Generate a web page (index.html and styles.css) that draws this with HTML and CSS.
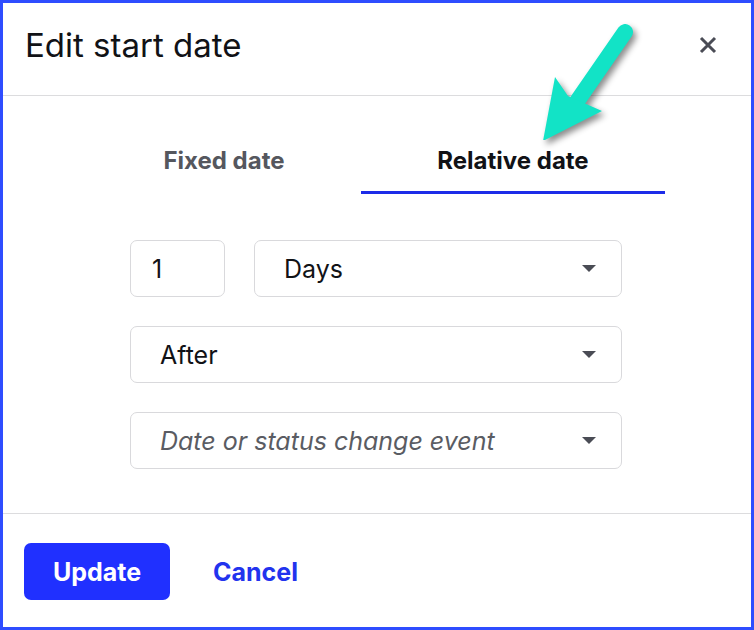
FILE: index.html
```html
<!DOCTYPE html>
<html lang="en">
<head>
    <meta charset="UTF-8">
    <meta name="viewport" content="width=device-width, initial-scale=1.0">
    <title>Edit start date</title>
    <link rel="stylesheet" href="styles.css">
</head>
<body>

    <div class="frame">
        <div class="modal-header">
            <h1>Edit start date</h1>
            <button class="close" aria-label="Close">
                <svg width="18" height="18" viewBox="0 0 18 18">
                    <path d="M2 2 L16 16 M16 2 L2 16" stroke="#4a4c55" stroke-width="3" stroke-linecap="butt"/>
                </svg>
            </button>
        </div>

        <div class="modal-body">
            <div class="tabs">
                <div class="tab">Fixed date</div>
                <div class="tab active">Relative date</div>
            </div>

            <form class="fields">
                <div class="row">
                    <div class="field number">1</div>
                    <div class="field select">
                        <span>Days</span>
                        <span class="caret"></span>
                    </div>
                </div>
                <div class="field select wide">
                    <span>After</span>
                    <span class="caret"></span>
                </div>
                <div class="field select wide">
                    <span class="placeholder">Date or status change event</span>
                    <span class="caret"></span>
                </div>
            </form>
        </div>

        <div class="modal-footer">
            <button class="btn-primary">Update</button>
            <button class="btn-link">Cancel</button>
        </div>

        <!-- flecha de anotación -->
        <svg class="pointer" width="120" height="140" viewBox="0 0 120 140">
            <line x1="105" y1="32" x2="58" y2="100" stroke="#12e3c6" stroke-width="16" stroke-linecap="round"/>
            <polygon points="23,141 35,77 48,96 82,111" fill="#12e3c6"/>
        </svg>
    </div>

</body>
</html>
```

FILE: styles.css
```css
body {
    margin: 0;
    padding: 0;
    font-family: 'Inter', 'Liberation Sans', sans-serif;
    background: #fff;
}

.frame {
    position: relative;
    width: 754px;
    height: 630px;
    box-sizing: border-box;
    border: 3px solid #2f4dff;
    display: flex;
    flex-direction: column;
    background: #fff;
}

.modal-header {
    height: 92px;
    border-bottom: 1px solid #dcdcde;
    display: flex;
    align-items: center;
    justify-content: space-between;
    padding: 0 34px 0 22px;
}

.modal-header h1 {
    margin: 0 0 9px;
    font-size: 33px;
    font-weight: 400;
    color: #111216;
}

.close {
    border: none;
    background: none;
    padding: 0;
    width: 18px;
    height: 18px;
    margin-bottom: 8px;
    cursor: pointer;
}

.modal-body {
    flex: 1;
    border-bottom: 1px solid #dcdcde;
    padding-top: 51px;
}

.tabs {
    display: flex;
    justify-content: center;
    padding-right: 2px;
}

.tab {
    font-size: 24px;
    font-weight: 700;
    line-height: 28px;
    color: #55575e;
    padding: 0 0 16px;
    border-bottom: 3px solid transparent;
    text-align: center;
}

.tab:first-child {
    width: 274px;
}

.tab.active {
    width: 304px;
    color: #111216;
    border-bottom-color: #1d2ce8;
}

.fields {
    width: 492px;
    margin: 46px 129px 0 127px;
    display: flex;
    flex-direction: column;
    gap: 29px;
}

.row {
    display: flex;
    gap: 29px;
}

.field {
    height: 57px;
    box-sizing: border-box;
    border: 1px solid #d9d9dc;
    border-radius: 7px;
    display: flex;
    align-items: center;
    font-size: 25px;
    color: #111216;
}

.field.number {
    width: 95px;
    flex: none;
    padding-left: 21px;
}

.field.select {
    justify-content: space-between;
    padding: 0 25px 0 29px;
}

.row .field.select {
    flex: 1;
}

.placeholder {
    font-style: italic;
    color: #5a5c63;
}

.caret {
    width: 0;
    height: 0;
    border-left: 7px solid transparent;
    border-right: 7px solid transparent;
    border-top: 7px solid #4a4c55;
}

.modal-footer {
    height: 113px;
    box-sizing: border-box;
    padding: 29px 21px 0;
    display: flex;
    align-items: flex-start;
    gap: 43px;
}

.btn-primary {
    width: 146px;
    height: 57px;
    border: none;
    border-radius: 7px;
    background: #2030ff;
    color: #fff;
    font-family: inherit;
    font-size: 25px;
    font-weight: 700;
    cursor: pointer;
}

.btn-link {
    border: none;
    background: none;
    padding: 0;
    height: 57px;
    color: #2233ee;
    font-family: inherit;
    font-size: 25px;
    font-weight: 700;
    cursor: pointer;
}

.pointer {
    position: absolute;
    left: 517px;
    top: -3px;
    filter: drop-shadow(3px 4px 3px rgba(0, 0, 0, 0.45));
}
```
